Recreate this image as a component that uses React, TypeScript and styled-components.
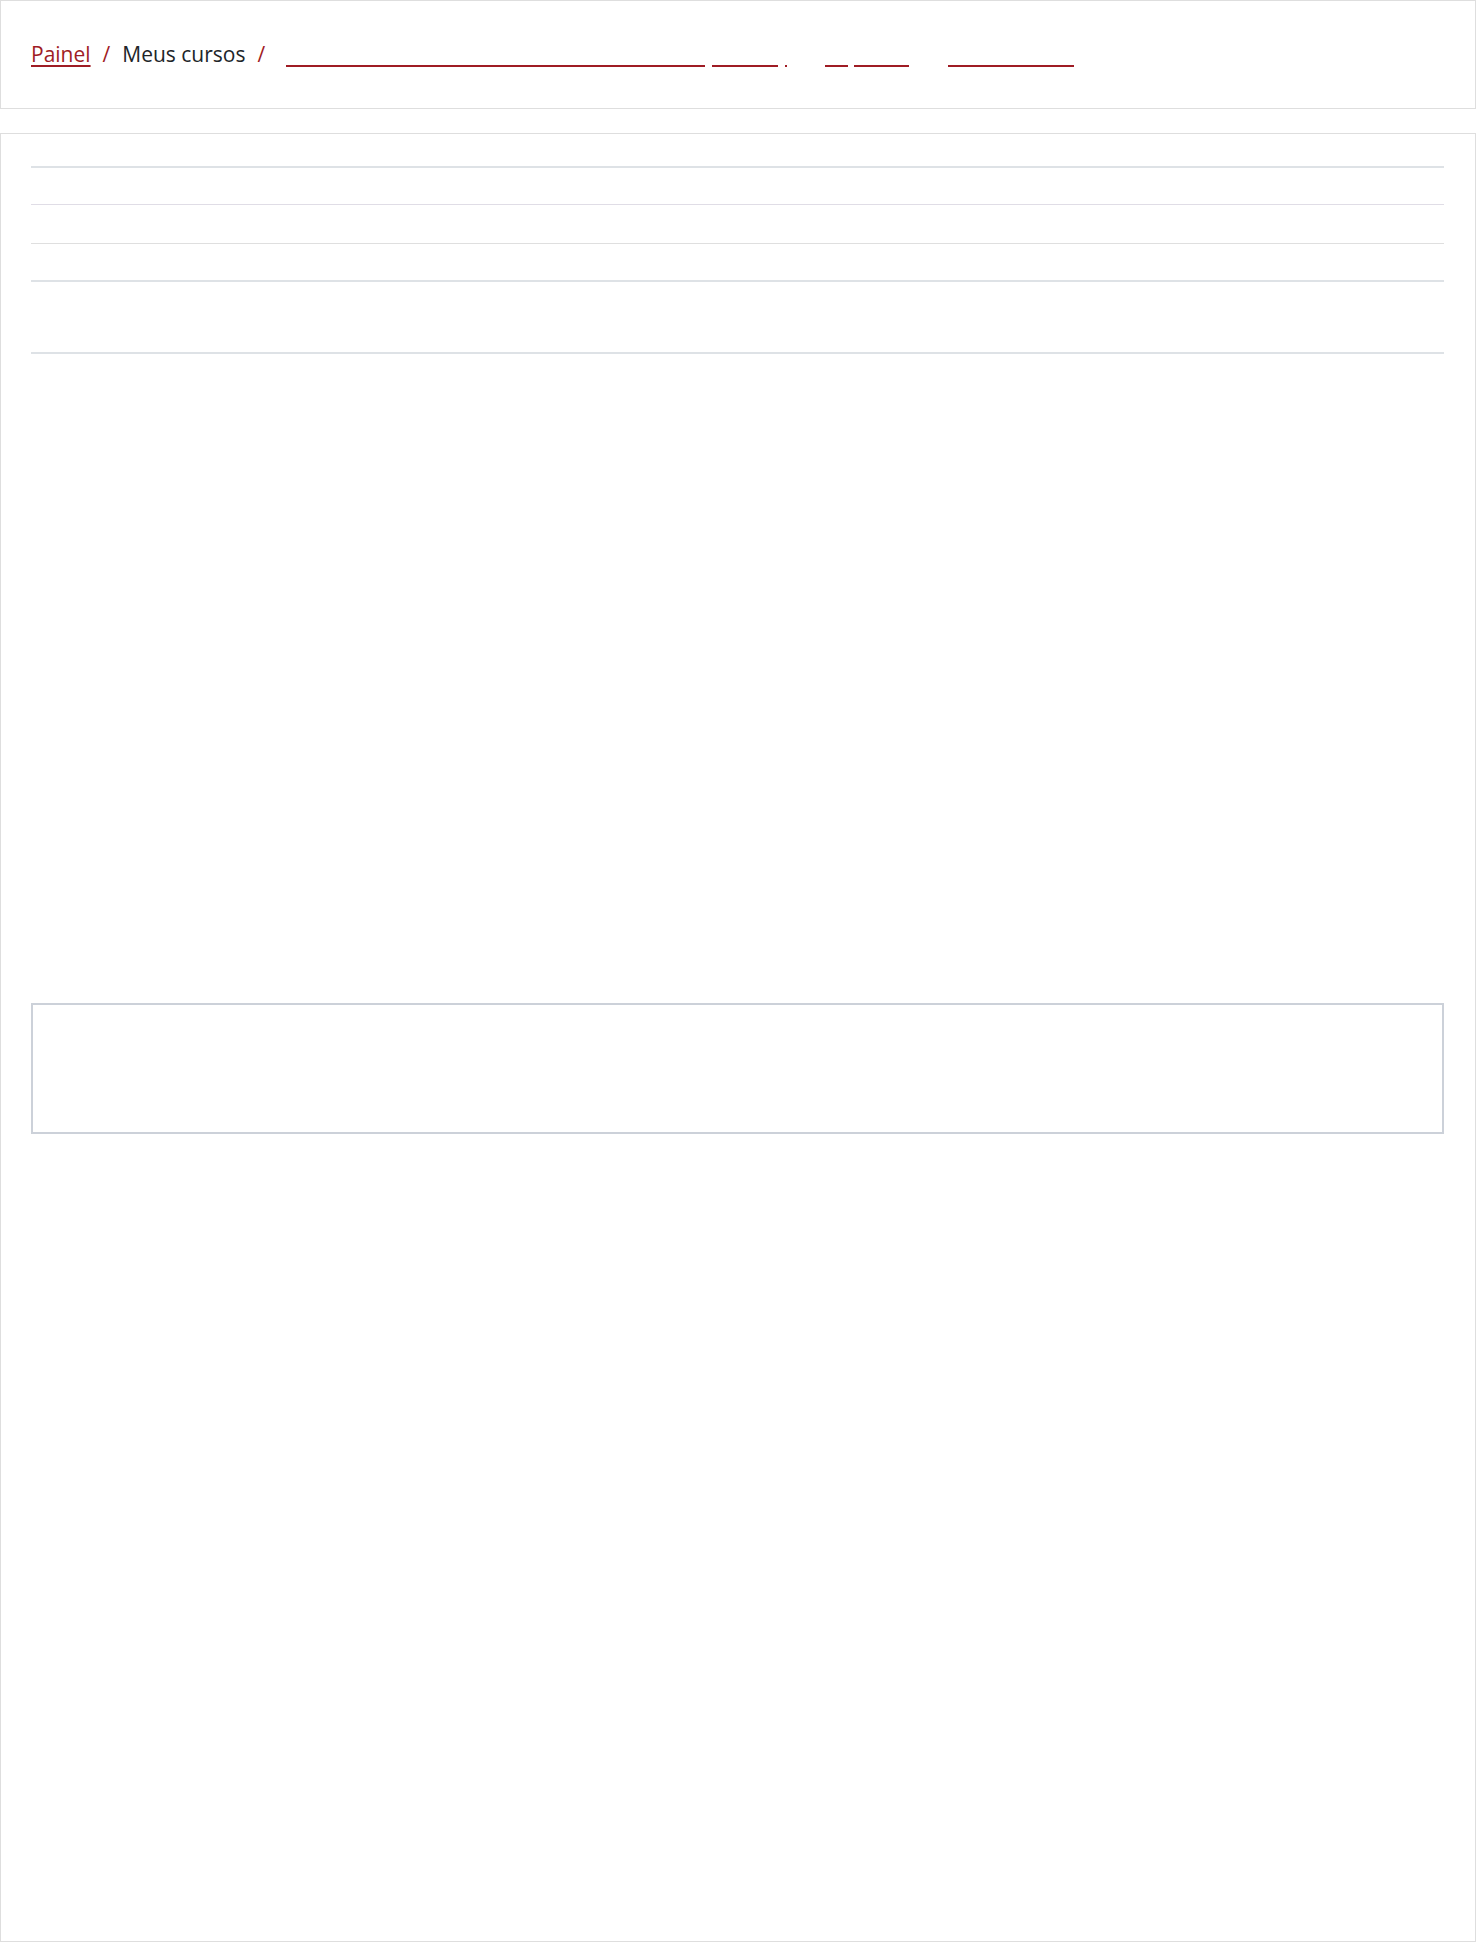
import React from "react";
import styled, { createGlobalStyle } from "styled-components";

const GlobalStyle = createGlobalStyle`
  html, body {
    margin: 0;
    padding: 0;
    background: #ffffff;
  }
  body {
    font-family: "Open Sans", "Noto Sans", Arial, sans-serif;
    color: #212529;
  }
  * {
    box-sizing: border-box;
  }
`;

const Page = styled.div`
  display: flex;
  flex-direction: column;
  gap: 24px;
  width: 1476px;
`;

const HeaderCard = styled.header`
  display: flex;
  align-items: center;
  height: 109px;
  padding: 0 30px;
  border: 1px solid #dedede;
  background: #fff;
`;

const Breadcrumb = styled.nav`
  display: flex;
  align-items: center;
  font-size: 21px;
  line-height: 28.6px;
  white-space: nowrap;
`;

const CrumbLink = styled.a`
  color: #9f1c24;
  text-decoration: underline;
  text-decoration-thickness: 2px;
  text-underline-offset: 3px;
  cursor: pointer;
`;

const CrumbText = styled.span`
  color: #212529;
`;

const Separator = styled.span`
  color: #9f1c24;
  padding: 0 12px;
`;

const CourseLink = styled.a`
  display: flex;
  align-items: flex-end;
  align-self: stretch;
  height: 28.6px;
  padding-bottom: 2px;
  margin-left: 9px;
  cursor: pointer;
`;

const Segment = styled.span<{ $w: number; $gap: number }>`
  display: block;
  width: ${(p) => p.$w}px;
  margin-left: ${(p) => p.$gap}px;
  height: 0;
  border-bottom: 2px solid #9f1c24;
`;

const ContentCard = styled.main`
  display: flex;
  flex-direction: column;
  height: 1809px;
  padding: 32px 31px 0 30px;
  border: 1px solid #dedede;
  background: #fff;
`;

const Table = styled.div`
  display: flex;
  flex-direction: column;
  border-bottom: 2px solid #dee2e6;
`;

const Row = styled.div<{ $h: number; $thick?: boolean; $color?: string }>`
  height: ${(p) => p.$h}px;
  border-top: ${(p) => (p.$thick ? 2 : 1)}px solid ${(p) => p.$color || "#dee2e6"};
`;

const EmptyPanel = styled.section`
  margin-top: 649px;
  height: 131px;
  border: 2px solid #ccd1d9;
  background: #fff;
`;

const segments = [
  { w: 419, gap: 0 },
  { w: 66, gap: 7 },
  { w: 2, gap: 7 },
  { w: 23, gap: 38 },
  { w: 55, gap: 6 },
  { w: 126, gap: 39 },
];

export default function App() {
  return (
    <>
      <GlobalStyle />
      <Page>
        <HeaderCard>
          <Breadcrumb>
            <CrumbLink>Painel</CrumbLink>
            <Separator>/</Separator>
            <CrumbText>Meus cursos</CrumbText>
            <Separator>/</Separator>
            <CourseLink>
              {segments.map((s, i) => (
                <Segment key={i} $w={s.w} $gap={s.gap} />
              ))}
            </CourseLink>
          </Breadcrumb>
        </HeaderCard>
        <ContentCard>
          <Table>
            <Row $h={38} $thick />
            <Row $h={39} $color="#e0dde6" />
            <Row $h={37} $color="#dfdfdf" />
            <Row $h={72} $thick />
          </Table>
          <EmptyPanel />
        </ContentCard>
      </Page>
    </>
  );
}
